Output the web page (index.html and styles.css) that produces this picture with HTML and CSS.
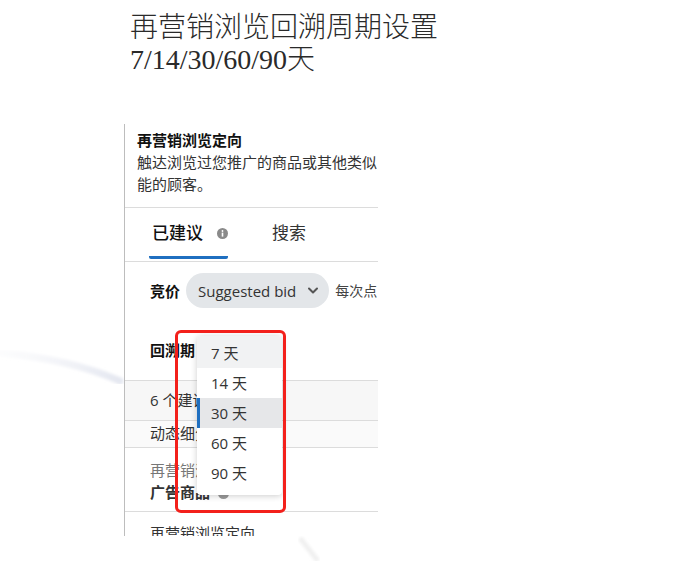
FILE: index.html
```html
<!DOCTYPE html>
<html lang="zh-CN">
<head>
	<meta charset="UTF-8">
	<title>再营销浏览回溯周期设置</title>
	<link rel="stylesheet" href="styles.css">
</head>
<body>

	<!-- faint strokes left on the slide behind the screenshot -->
	<svg class="decor" width="696" height="561" viewBox="0 0 696 561">
		<defs>
			<linearGradient id="arcFade" x1="0" y1="0" x2="1" y2="0">
				<stop offset="0" stop-color="#f1f2f7" stop-opacity="0.2"/>
				<stop offset="1" stop-color="#e4e7f0"/>
			</linearGradient>
			<filter id="soft"><feGaussianBlur stdDeviation="1.6"/></filter>
		</defs>
		<path d="M0,353 Q70,359 120,381" fill="none" stroke="url(#arcFade)" stroke-width="7" stroke-linecap="round" filter="url(#soft)"/>
		<path d="M300,538 L318,561" fill="none" stroke="#f0f0f0" stroke-width="5" filter="url(#soft)"/>
	</svg>

	<h1 class="title">再营销浏览回溯周期设置<br>7/14/30/60/90天</h1>

	<div class="panel">
		<div class="panel-head">
			<h2>再营销浏览定向</h2>
			<p>触达浏览过您推广的商品或其他类似<br>能的顾客。</p>
		</div>

		<div class="tabs">
			<span class="tab active">已建议
				<svg class="info" width="11" height="11" viewBox="0 0 11 11">
					<circle cx="5.5" cy="5.5" r="5.5" fill="#8a8a8a"/>
					<rect x="4.7" y="4.6" width="1.6" height="4" fill="#fff"/>
					<circle cx="5.5" cy="3" r="0.9" fill="#fff"/>
				</svg>
			</span>
			<span class="tab">搜索</span>
		</div>

		<div class="bid-row">
			<b>竞价</b>
			<span class="pill">Suggested bid
				<svg width="10" height="7" viewBox="0 0 10 7">
					<path d="M1,1.5 L5,5.5 L9,1.5" fill="none" stroke="#555" stroke-width="2" stroke-linecap="round" stroke-linejoin="round"/>
				</svg>
			</span>
			<span class="bid-note">每次点</span>
		</div>

		<div class="lookback"><b>回溯期</b></div>

		<div class="row row-count">6 个建议</div>
		<div class="row row-dyn">动态细分</div>
		<div class="row row-item">
			<span class="muted">再营销浏</span><br>
			<b>广告商品</b>
			<svg class="info" width="11" height="11" viewBox="0 0 11 11">
				<circle cx="5.5" cy="5.5" r="5.5" fill="#9a9a9a"/>
			</svg>
		</div>
		<div class="row row-last">再营销浏览定向</div>

		<ul class="dropdown">
			<li class="opt hover">7 天</li>
			<li class="opt">14 天</li>
			<li class="opt selected">30 天</li>
			<li class="opt">60 天</li>
			<li class="opt">90 天</li>
		</ul>
	</div>

	<div class="mark"></div>

</body>
</html>
```

FILE: styles.css
```css
body {
	margin: 0;
	padding-top: 12px;
	height: 549px;
	overflow: hidden;
	position: relative;
	background: #fff;
	color: #333;
	font-family: "Open Sans", "Noto Sans CJK SC", sans-serif;
}

.decor {
	position: absolute;
	top: 0;
	left: 0;
	pointer-events: none;
}

.title {
	position: relative;
	margin: 0 0 0 130px;
	font-family: "Liberation Serif", "Noto Sans CJK SC", serif;
	font-weight: 300;
	font-size: 28px;
	line-height: 32px;
	color: #2a2a2a;
}

.panel {
	position: relative;
	margin: 48px 0 0 124px;
	width: 254px;
	height: 412px;
	box-sizing: border-box;
	border-left: 1px solid #bdbdbd;
	overflow: hidden;
	white-space: nowrap;
	background: #fff;
	font-size: 15px;
	line-height: 22px;
}

.panel-head {
	padding: 5px 0 12px 12px;
	border-bottom: 1px solid #dcdcdc;
}

.panel-head h2 {
	margin: 0;
	font-size: 15px;
	font-weight: bold;
	color: #111;
}

.panel-head p {
	margin: 0;
	color: #333;
}

.tabs {
	display: flex;
	padding: 0 0 2px 24px;
	border-bottom: 1px solid #dcdcdc;
}

.tab {
	display: flex;
	align-items: center;
	padding: 13px 0 11px 3px;
	border-bottom: 3px solid transparent;
	font-size: 17px;
	line-height: 24px;
	color: #333;
}

.tab.active {
	border-bottom-color: #1f6fc0;
	border-radius: 0 0 2px 2px;
	color: #111;
	font-weight: 500;
}

.tab.active .info {
	margin-left: 14px;
}

.tab + .tab {
	margin-left: 41px;
}

.bid-row {
	display: flex;
	align-items: center;
	padding: 11px 0 0 25px;
}

.bid-row b,
.lookback b {
	color: #111;
}

.pill {
	display: flex;
	align-items: center;
	gap: 12px;
	height: 35px;
	margin-left: 6px;
	padding: 0 11px 0 12px;
	border-radius: 18px;
	background: #e3e6e9;
	color: #333;
}

.bid-note {
	margin-left: 6px;
	font-size: 14px;
	color: #444;
}

.lookback {
	padding: 31px 0 19px 25px;
	border-bottom: 1px solid #dcdcdc;
}

.row {
	padding-left: 25px;
	border-bottom: 1px solid #dcdcdc;
	color: #333;
}

.row-count {
	padding-top: 8px;
	padding-bottom: 9px;
	background: #f7f7f7;
}

.row-dyn {
	padding-top: 1px;
	padding-bottom: 3px;
	background: #fafafa;
}

.row-item {
	padding-top: 11px;
	padding-bottom: 8px;
}

.row-item .info {
	margin-left: 4px;
	vertical-align: -1px;
}

.row-last {
	padding-top: 10px;
	border-bottom: none;
}

.muted {
	color: #777;
}

.dropdown {
	position: absolute;
	top: 212px;
	left: 72px;
	width: 85px;
	margin: 0;
	padding: 0 0 7px;
	list-style: none;
	background: #fff;
	border-radius: 4px;
	box-shadow: 0 1px 6px rgba(0, 0, 0, 0.2);
	font-size: 15px;
	color: #333;
}

.opt {
	height: 30px;
	line-height: 30px;
	padding-left: 14px;
}

.opt.hover {
	height: 32px;
	line-height: 34px;
	background: #f1f2f3;
	border-radius: 4px 4px 0 0;
}

.opt.selected {
	padding-left: 11px;
	border-left: 3px solid #1f6fc0;
	background: #e6e7e9;
}

.mark {
	position: absolute;
	top: 330px;
	left: 175px;
	width: 111px;
	height: 183px;
	box-sizing: border-box;
	border: 3px solid #f3201b;
	border-radius: 6px;
}
```
